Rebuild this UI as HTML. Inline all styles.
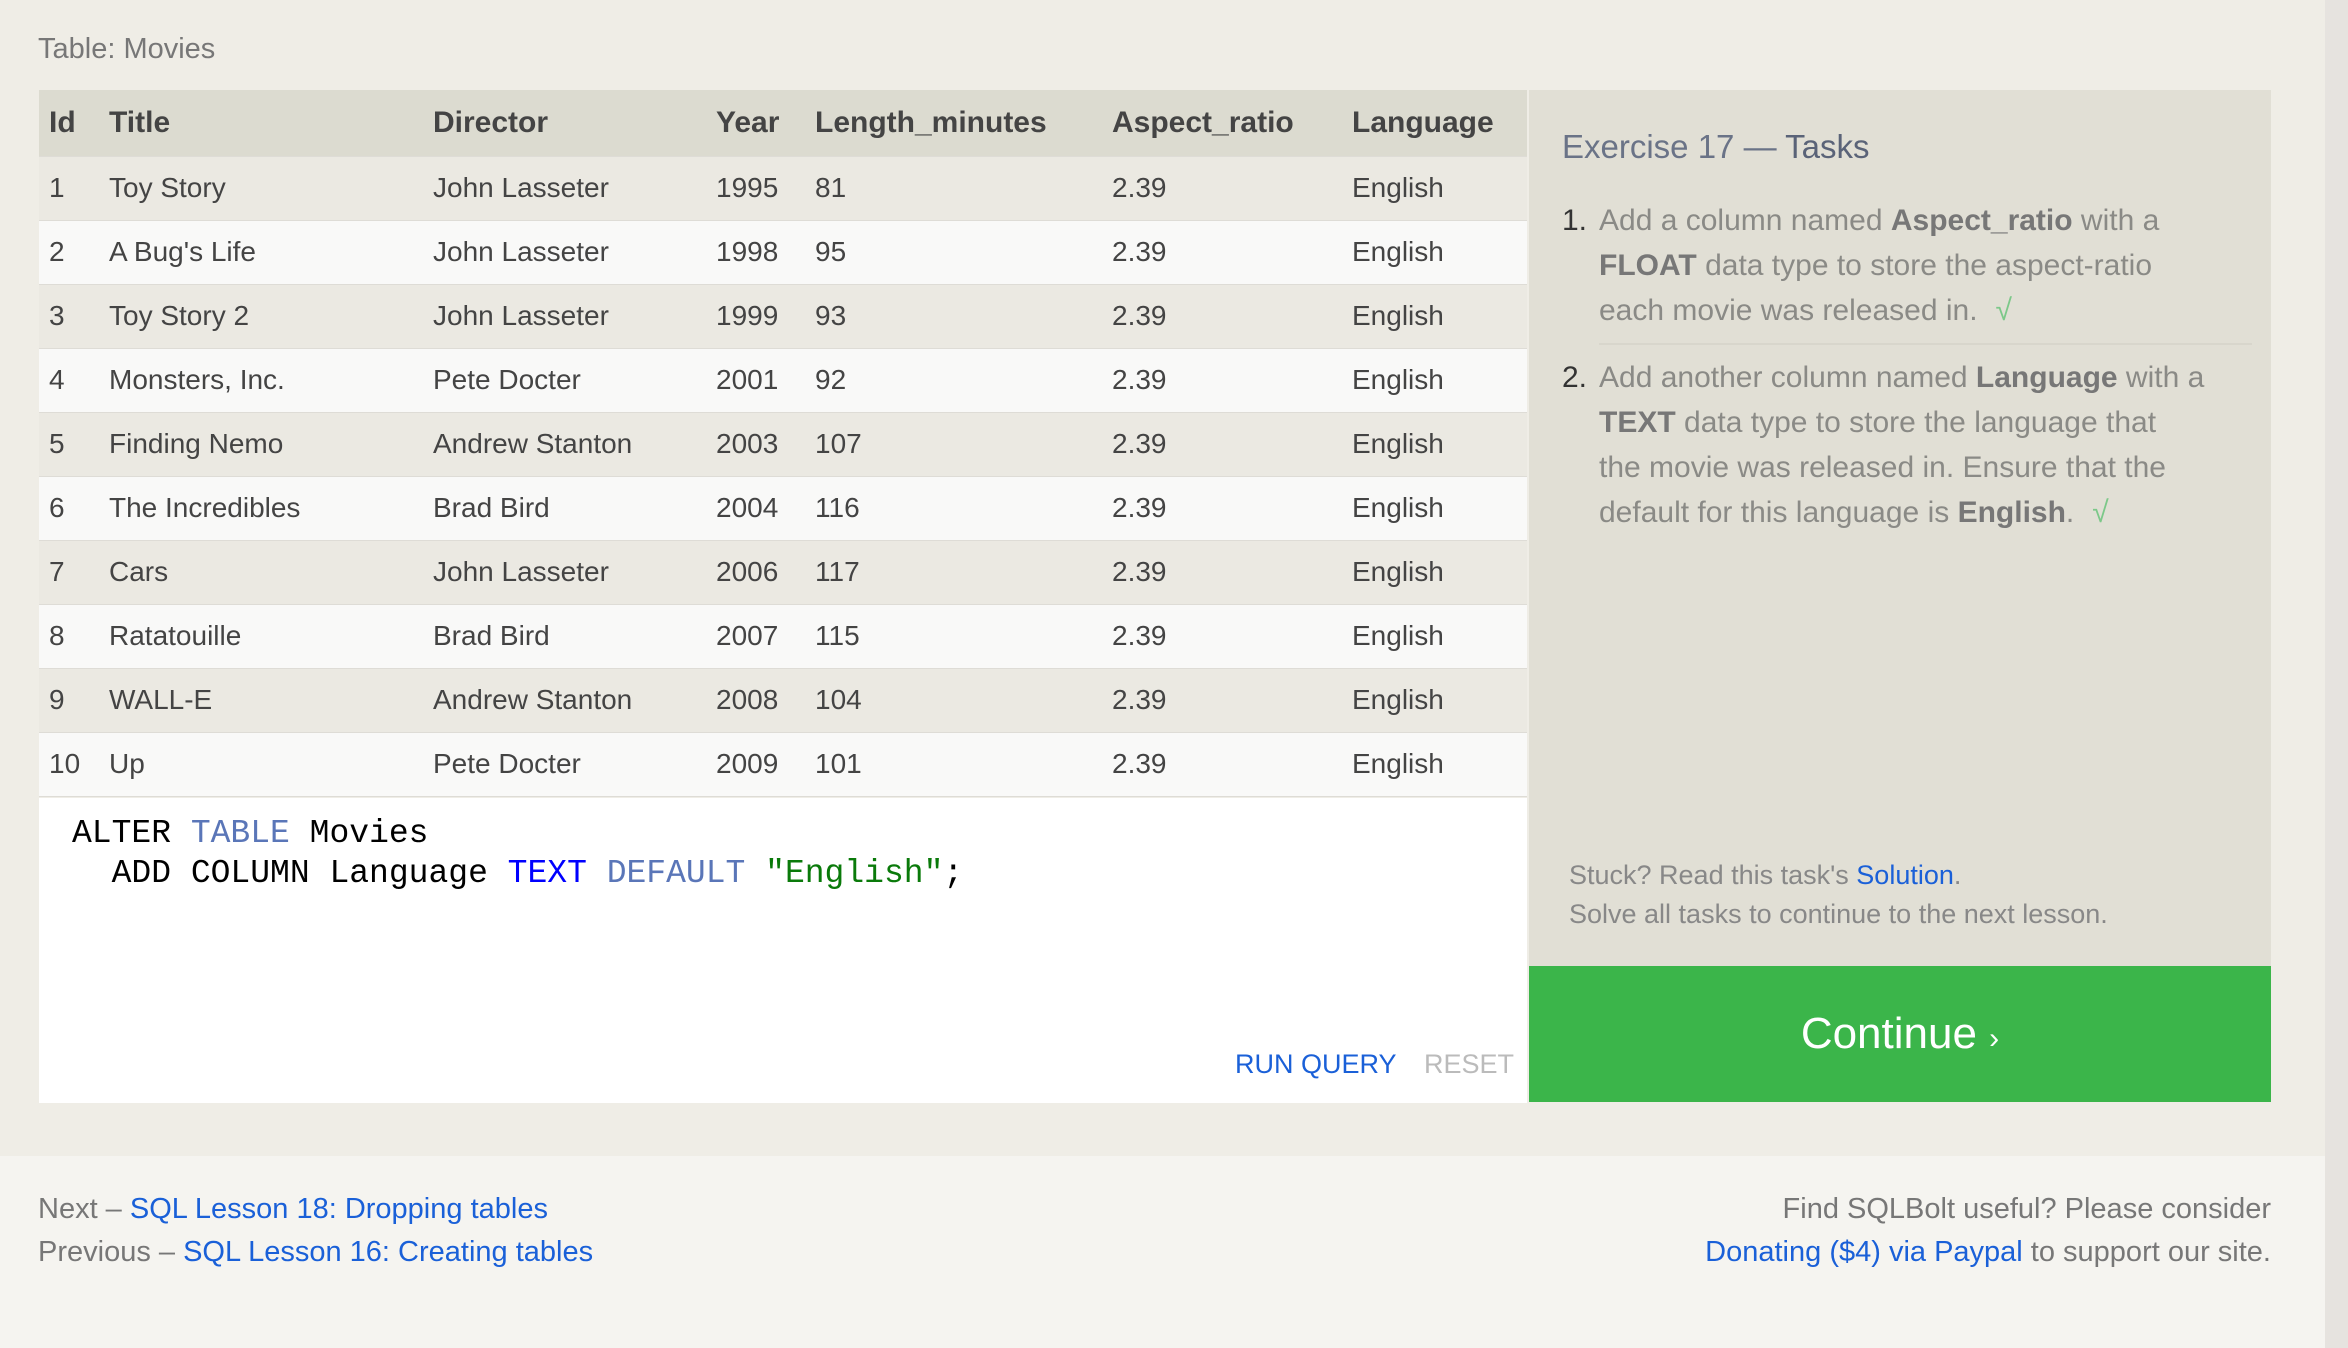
<!DOCTYPE html>
<html><head><meta charset="utf-8"><style>
*{margin:0;padding:0;box-sizing:border-box}
body{width:2348px;height:1348px;background:#f5f4f0;font-family:"Liberation Sans",sans-serif;position:relative;overflow:hidden}
.main{position:absolute;left:0;top:0;width:2325px;height:1156px;background:#efede6}
.strip{position:absolute;left:2325px;top:0;width:23px;height:1348px;background:#e6e3df}
.cap{position:absolute;left:38px;top:33px;font-size:29px;color:#777}
table{position:absolute;left:39px;top:90px;width:1488px;border-collapse:collapse;table-layout:fixed;font-size:28px;color:#444}
td,th{height:64px;padding-left:10px;text-align:left;white-space:nowrap;border-bottom:1px solid #dedcd6}
th{font-weight:bold;color:#444;background:#dcdbd0;height:66px;font-size:30px}
tr.o td{background:#ebe9e2}
tr.e td{background:#f9f9f8}
.ed{position:absolute;left:39px;top:798px;width:1488px;height:305px;background:#fff}
.code{position:absolute;left:33px;top:16px;font-family:"Liberation Mono",monospace;font-size:33px;line-height:40px;color:#000;white-space:pre}
.k1{color:#5a76b8}.k2{color:#0000ff}.s{color:#0a7a0a}
.btn{position:absolute;top:251px;font-size:27px}
.panel{position:absolute;left:1529px;top:90px;width:742px;height:876px;background:#e1dfd5}
.h{position:absolute;left:33px;top:38px;font-size:33px;color:#6a7387}
.h b{font-weight:normal;color:#5a6378}
ol{position:absolute;left:33px;top:108px;width:690px;list-style:none;font-size:30px;line-height:45px;color:#8a8a86;white-space:nowrap}
li{position:relative;padding-left:37px}
li .n{position:absolute;left:0;color:#333}
li b{color:#777}
.ck{color:#7cc889;margin-left:18px}
hr{border:0;border-top:2px solid #d8d6cc;margin:10px 0 10px 37px}
.stuck{position:absolute;left:40px;top:766px;font-size:27px;line-height:39px;color:#888}
a{color:#1a60d8;text-decoration:none}
.cont{position:absolute;left:1529px;top:966px;width:742px;height:136px;background:#3bb54a;color:#fff;font-size:44px;text-align:center;line-height:136px}
.foot{position:absolute;top:1188px;font-size:29px;line-height:43px;color:#777}
</style></head><body>
<div class="main"></div><div class="strip"></div>
<div class="cap">Table: Movies</div>
<table>
<colgroup><col style="width:60px"><col style="width:324px"><col style="width:283px"><col style="width:99px"><col style="width:297px"><col style="width:240px"><col style="width:185px"></colgroup>
<tr><th>Id</th><th>Title</th><th>Director</th><th>Year</th><th>Length_minutes</th><th>Aspect_ratio</th><th>Language</th></tr>
<tr class="o"><td>1</td><td>Toy Story</td><td>John Lasseter</td><td>1995</td><td>81</td><td>2.39</td><td>English</td></tr>
<tr class="e"><td>2</td><td>A Bug's Life</td><td>John Lasseter</td><td>1998</td><td>95</td><td>2.39</td><td>English</td></tr>
<tr class="o"><td>3</td><td>Toy Story 2</td><td>John Lasseter</td><td>1999</td><td>93</td><td>2.39</td><td>English</td></tr>
<tr class="e"><td>4</td><td>Monsters, Inc.</td><td>Pete Docter</td><td>2001</td><td>92</td><td>2.39</td><td>English</td></tr>
<tr class="o"><td>5</td><td>Finding Nemo</td><td>Andrew Stanton</td><td>2003</td><td>107</td><td>2.39</td><td>English</td></tr>
<tr class="e"><td>6</td><td>The Incredibles</td><td>Brad Bird</td><td>2004</td><td>116</td><td>2.39</td><td>English</td></tr>
<tr class="o"><td>7</td><td>Cars</td><td>John Lasseter</td><td>2006</td><td>117</td><td>2.39</td><td>English</td></tr>
<tr class="e"><td>8</td><td>Ratatouille</td><td>Brad Bird</td><td>2007</td><td>115</td><td>2.39</td><td>English</td></tr>
<tr class="o"><td>9</td><td>WALL-E</td><td>Andrew Stanton</td><td>2008</td><td>104</td><td>2.39</td><td>English</td></tr>
<tr class="e"><td>10</td><td>Up</td><td>Pete Docter</td><td>2009</td><td>101</td><td>2.39</td><td>English</td></tr>
</table>
<div class="ed">
<div class="code">ALTER <span class="k1">TABLE</span> Movies
  ADD COLUMN Language <span class="k2">TEXT</span> <span class="k1">DEFAULT</span> <span class="s">"English"</span>;</div>
<div class="btn" style="left:1196px;color:#1a60d8">RUN QUERY</div>
<div class="btn" style="left:1385px;color:#bbb">RESET</div>
</div>
<div class="panel">
<div class="h">Exercise 17 — <b>Tasks</b></div>
<ol>
<li><span class="n">1.</span>Add a column named <b>Aspect_ratio</b> with a<br><b>FLOAT</b> data type to store the aspect-ratio<br>each movie was released in.<span class="ck">√</span></li>
<hr>
<li><span class="n">2.</span>Add another column named <b>Language</b> with a<br><b>TEXT</b> data type to store the language that<br>the movie was released in. Ensure that the<br>default for this language is <b>English</b>.<span class="ck">√</span></li>
</ol>
<div class="stuck">Stuck? Read this task's <a>Solution</a>.<br>Solve all tasks to continue to the next lesson.</div>
</div>
<div class="cont">Continue <span style="font-size:30px">›</span></div>
<div class="foot" style="left:38px">Next – <a>SQL Lesson 18: Dropping tables</a><br>Previous – <a>SQL Lesson 16: Creating tables</a></div>
<div class="foot" style="right:77px;text-align:right">Find SQLBolt useful? Please consider<br><a>Donating ($4) via Paypal</a> to support our site.</div>
</body></html>
